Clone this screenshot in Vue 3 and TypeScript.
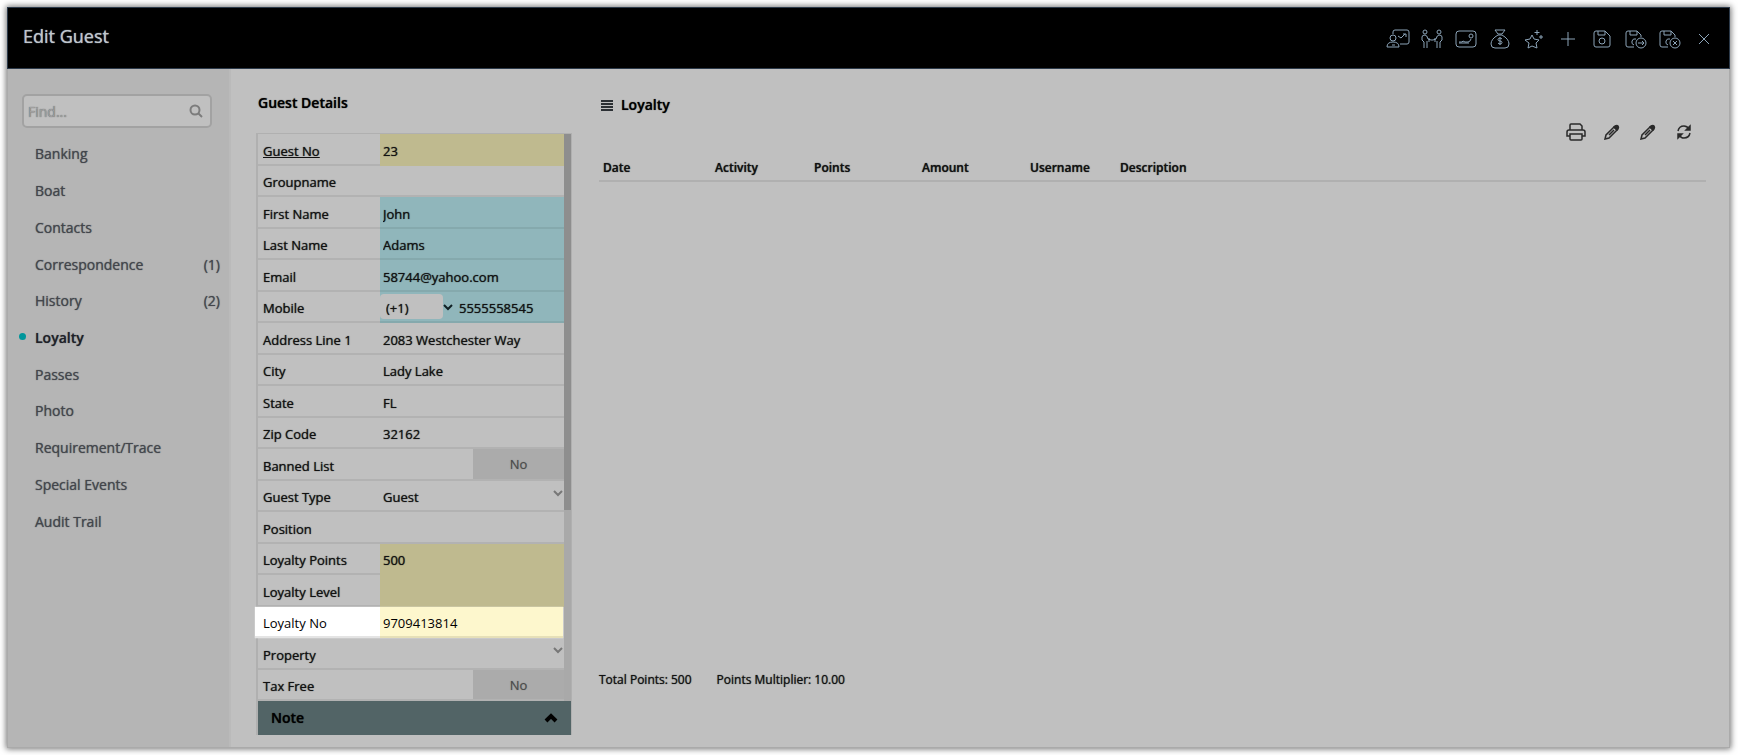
<script setup lang="ts">
import { ref } from 'vue'

interface MenuItem { name: string; count?: number }
interface Field {
  id: string
  label: string
  value: string
  tone?: 'locked' | 'required'
  kind?: 'toggle' | 'select' | 'phone'
  link?: boolean
  focus?: boolean
}

const search = ref('')
const active = ref('Loyalty')
const noteOpen = ref(true)

const menu: MenuItem[] = [
  { name: 'Banking' },
  { name: 'Boat' },
  { name: 'Contacts' },
  { name: 'Correspondence', count: 1 },
  { name: 'History', count: 2 },
  { name: 'Loyalty' },
  { name: 'Passes' },
  { name: 'Photo' },
  { name: 'Requirement/Trace' },
  { name: 'Special Events' },
  { name: 'Audit Trail' },
]

const fields = ref<Field[]>([
  { id: 'guest-no', label: 'Guest No', value: '23', tone: 'locked', link: true },
  { id: 'group', label: 'Groupname', value: '' },
  { id: 'first', label: 'First Name', value: 'John', tone: 'required' },
  { id: 'last', label: 'Last Name', value: 'Adams', tone: 'required' },
  { id: 'email', label: 'Email', value: '58744@yahoo.com', tone: 'required' },
  { id: 'mobile', label: 'Mobile', value: '5555558545', tone: 'required', kind: 'phone' },
  { id: 'address', label: 'Address Line 1', value: '2083 Westchester Way' },
  { id: 'city', label: 'City', value: 'Lady Lake' },
  { id: 'state', label: 'State', value: 'FL' },
  { id: 'zip', label: 'Zip Code', value: '32162' },
  { id: 'banned', label: 'Banned List', value: 'No', kind: 'toggle' },
  { id: 'type', label: 'Guest Type', value: 'Guest', kind: 'select' },
  { id: 'position', label: 'Position', value: '' },
  { id: 'points', label: 'Loyalty Points', value: '500', tone: 'locked' },
  { id: 'level', label: 'Loyalty Level', value: '', tone: 'locked' },
  { id: 'loyalty-no', label: 'Loyalty No', value: '9709413814', tone: 'locked', focus: true },
  { id: 'property', label: 'Property', value: '', kind: 'select' },
  { id: 'tax', label: 'Tax Free', value: 'No', kind: 'toggle' },
])

const columns = ['Date', 'Activity', 'Points', 'Amount', 'Username', 'Description']
</script>

<template>
  <div class="page">
    <div class="window">
      <header class="titlebar">
        <h1>Edit Guest</h1>
        <div class="actions">
          <button type="button" aria-label="Guest presentation">
            <svg width="24" height="20" viewBox="0 0 24 20"><path d="M7 5V3q0-2 2-2h12q2 0 2 2v10q0 2-2 2h-7M12 7l3 2 4-4M17 5h3v3"/><circle cx="7" cy="9" r="3"/><path d="M1 18q0-5 6-5t6 5zM6 16h3"/></svg>
          </button>
          <button type="button" aria-label="Merge guests">
            <svg width="22" height="20" viewBox="0 0 22 20"><circle cx="4" cy="3" r="2"/><circle cx="18" cy="3" r="2"/><path d="M3 19v-6L1 11V8q0-2 3-2 2 0 3 4l3 1h2l3-1q1-4 3-4 3 0 3 2v3l-2 2v6M6 19v-7M16 19v-7M8 9v4M14 9v4"/></svg>
          </button>
          <button type="button" aria-label="Guest card">
            <svg width="22" height="20" viewBox="0 0 22 20"><rect x="1" y="2" width="20" height="16" rx="3"/><path d="M4 13h3l1-1 2 1h3q2 0 3-3M14 7q0-2 2-2t2 2-2 2-2-2M4 14h10"/></svg>
          </button>
          <button type="button" aria-label="Deposits">
            <svg width="20" height="20" viewBox="0 0 20 20"><path d="M5 1h10l-3 4H8zM8 6Q1 10 1 15q0 4 4 4h10q4 0 4-4 0-5-7-9zM12 10q-1-1-2-1-2 0-2 1.500t2 1.500 2 1.500-2 1.500q-1 0-2-1M10 8v8"/></svg>
          </button>
          <button type="button" aria-label="Loyalty rewards">
            <svg width="20" height="20" viewBox="0 0 20 20"><path d="m8 6 2 4 5 1-3 3 1 5-5-2-4 2 1-5-4-3 5-1zM13 1v5M10.500 3.500h5M17 6v4M15 8h4"/></svg>
          </button>
          <button type="button" aria-label="Add">
            <svg width="16" height="20" viewBox="0 0 16 20"><path d="M8 3v14M1 10h14"/></svg>
          </button>
          <button type="button" aria-label="Save">
            <svg width="18" height="20" viewBox="0 0 18 20"><path d="M3 2h9l5 5v9q0 2-2 2H3q-2 0-2-2V4q0-2 2-2zM5 2v4h7V2"/><circle cx="9" cy="12" r="3"/></svg>
          </button>
          <button type="button" aria-label="Save and continue">
            <svg width="22" height="20" viewBox="0 0 22 20"><path d="M9 18H3q-2 0-2-2V4q0-2 2-2h9l4 4v2M5 2v4h7V2M11 10q-3-1-4 2t2 4"/><circle cx="16" cy="14" r="5"/><path d="M13 14h6M17 12l2 2-2 2"/></svg>
          </button>
          <button type="button" aria-label="Save and close">
            <svg width="22" height="20" viewBox="0 0 22 20"><path d="M9 18H3q-2 0-2-2V4q0-2 2-2h9l4 4v2M5 2v4h7V2M11 10q-3-1-4 2t2 4"/><circle cx="16" cy="14" r="5"/><path d="m14 12 4 4M18 12l-4 4"/></svg>
          </button>
          <button type="button" aria-label="Close">
            <svg width="14" height="20" viewBox="0 0 14 20"><path d="m2 5 10 10M12 5 2 15"/></svg>
          </button>
        </div>
      </header>

      <div class="body">
        <nav class="sidebar">
          <div class="search">
            <input v-model="search" type="text" placeholder="Find..." aria-label="Find" />
            <svg width="14" height="14" viewBox="0 0 14 14"><circle cx="6" cy="6" r="4.500"/><path d="m9 9 4 4"/></svg>
          </div>
          <ul>
            <li v-for="item in menu" :key="item.name" :class="{ current: item.name === active }">
              <a href="#" @click.prevent="active = item.name">
                <span>{{ item.name }}</span>
                <span v-if="item.count">({{ item.count }})</span>
              </a>
            </li>
          </ul>
        </nav>

        <section class="details">
          <h2>Guest Details</h2>
          <form @submit.prevent>
            <div class="scroller">
              <div class="rows">
                <div v-for="f in fields" :key="f.id" class="row" :class="[f.tone, f.kind, { focus: f.focus }]">
                  <label :for="f.id"><a v-if="f.link" href="#">{{ f.label }}</a><template v-else>{{ f.label }}</template></label>
                  <div class="value">
                    <button v-if="f.kind === 'toggle'" :id="f.id" type="button">{{ f.value }}</button>
                    <template v-else-if="f.kind === 'select'">
                      <select :id="f.id" v-model="f.value"><option>{{ f.value }}</option></select>
                      <svg class="caret" width="10" height="8" viewBox="0 0 10 8"><path d="m1 2 4 4 4-4"/></svg>
                    </template>
                    <template v-else>
                      <template v-if="f.kind === 'phone'">
                        <select class="code" aria-label="Country code"><option>(+1)</option></select>
                        <svg class="caret" width="10" height="8" viewBox="0 0 10 8"><path d="m1 2 4 4 4-4"/></svg>
                      </template>
                      <input :id="f.id" v-model="f.value" type="text" />
                    </template>
                  </div>
                </div>
              </div>
              <div class="track"><div class="thumb"></div></div>
            </div>
            <button class="note" type="button" :aria-expanded="noteOpen" @click="noteOpen = !noteOpen">
              <span>Note</span>
              <svg width="14" height="10" viewBox="0 0 14 10"><path d="m2 8 5-5 5 5"/></svg>
            </button>
          </form>
        </section>

        <section class="loyalty">
          <h2>
            <svg width="12" height="13" viewBox="0 0 12 13"><path d="M0 2h12M0 5h12M0 8h12M0 11h12"/></svg>
            Loyalty
          </h2>
          <div class="tools">
            <button type="button" aria-label="Print">
              <svg width="20" height="20" viewBox="0 0 20 20"><path d="M4 8V3q0-1 1-1h9l2 2v4M4 14H1v-4q0-2 2-2h14q2 0 2 2v4h-3M4 12h12v5q0 1-1 1H5q-1 0-1-1z"/></svg>
            </button>
            <button type="button" aria-label="Edit">
              <svg width="16" height="16" viewBox="0 0 16 16"><path d="m1 15 1-4 8-8 3 3-8 8zM5 11l5-5"/><path class="solid" d="m10 3 1-1q2-1 3 0t0 3l-1 1z"/></svg>
            </button>
            <button type="button" aria-label="Edit all">
              <svg width="16" height="16" viewBox="0 0 16 16"><path d="m1 15 1-4 8-8 3 3-8 8zM5 11l5-5"/><path class="solid" d="m10 3 1-1q2-1 3 0t0 3l-1 1z"/></svg>
            </button>
            <button type="button" aria-label="Refresh">
              <svg width="16" height="16" viewBox="0 0 16 16"><path d="M2 7q1-5 6-5 3 0 5 3M14 9q-1 5-6 5-3 0-5-3"/><path class="solid" d="M14 2v4h-4zM2 14v-4h4z"/></svg>
            </button>
          </div>
          <table>
            <thead>
              <tr><th v-for="c in columns" :key="c" scope="col">{{ c }}</th></tr>
            </thead>
          </table>
          <footer>
            <span>Total Points: 500</span>
            <span>Points Multiplier: 10.00</span>
          </footer>
        </section>
      </div>
    </div>
  </div>
</template>

<style>
body { background: #fff; }
</style>

<style scoped>
* { box-sizing: border-box; }
.page {
  padding: 7px 8px 8px 7px;
  font: 13px/18px "Open Sans", "Noto Sans", sans-serif;
  color: #111;
  text-shadow: 0 0 1px rgba(0, 0, 0, 0.8);
}
button, input, select { font: inherit; color: inherit; text-shadow: inherit; background: none; border: 0; padding: 0; margin: 0; min-width: 0; border-radius: 0; outline: none; }
a { color: inherit; text-decoration: none; }
svg { display: block; fill: none; stroke: currentColor; }
.solid { fill: currentColor; }
.window { background: #c0c0c0; border: 1px solid #aaa; border-top: 0; box-shadow: 0 0 6px 1px rgba(0, 0, 0, 0.55); }
.titlebar {
  display: flex;
  justify-content: space-between;
  height: 62px;
  margin: 0 -1px;
  padding: 0 13px 0 15px;
  background: #000;
  border: 1px solid #2c3a4a;
}
h1 { margin: 15px 0 0; font-size: 18px; line-height: 26px; font-weight: 400; color: #c0c6cc; text-shadow: 0 0 1px #b4c4d4; }
.actions { display: flex; align-items: center; gap: 10px; color: #8ca4b8; padding-top: 2px; }
.actions button { display: flex; justify-content: center; width: 24px; }
.body { display: grid; grid-template-columns: 223px 342px minmax(0, 1fr); min-height: 677px; }

.sidebar { background: #b5b5b5; padding: 25px 0 0; border-right: 2px solid #bababa; color: #43464c; font-size: 14px; text-shadow: 0 0 1px rgba(67, 70, 76, 0.9); }
.search { display: flex; align-items: center; height: 34px; margin: 0 17px 0 14px; padding: 0 7px 0 4px; border: 2px solid #a2a2a2; border-radius: 5px; background: #c0c0c0; }
.search input { flex: 1; height: 28px; }
.search input::placeholder { color: #a0a0a0; opacity: 1; }
.search svg { color: #7c7c7c; stroke-width: 2; }
ul { display: grid; grid-auto-rows: 1fr; height: 404px; margin: 8px 0 0; padding: 0; list-style: none; }
li { position: relative; display: flex; align-items: center; }
li a { display: flex; flex: 1; justify-content: space-between; padding: 0 9px 0 27px; }
.current { color: #1e2128; font-weight: 600; }
.current::before { content: ""; position: absolute; left: 11px; top: 13px; width: 7px; height: 7px; border-radius: 50%; background: #00969b; }

h2 { margin: 0; font-size: 14px; line-height: 20px; font-weight: 600; color: #000; }
.details { padding: 24px 0 12px 25px; }
.details h2 { padding-left: 2px; }
form { width: 316px; margin-top: 20px; border: solid #b0b0b0; border-width: 1px 1px 0 2px; }
.scroller { display: grid; grid-template-columns: 1fr 7px; }
.track { background: #a9a9a9; }
.thumb { height: 376px; background: #8e8e8e; }
.row { display: grid; grid-template-columns: 122px minmax(0, 1fr); height: 31px; }
.row:nth-child(odd) { height: 32px; }
label, .value { border-bottom: 2px solid rgba(0, 0, 0, 0.07); }
label { display: flex; align-items: center; padding: 3px 0 0 5px; }
label a { text-decoration: underline; }
.value { position: relative; display: flex; align-items: center; }
.value input { flex: 1; height: 100%; padding: 3px 0 0 3px; }
.locked .value { background: #bfba8f; border-bottom-color: transparent; }
.required .value { background: #90b6bb; }
.value select { appearance: none; flex: 1; height: 100%; padding: 3px 0 0 3px; }
.value .caret { color: #777; stroke-width: 2; }
.select .caret { position: absolute; right: 1px; top: 8px; }
.phone .value .code { flex: 0 0 63px; height: 25px; padding: 2px 0 0 6px; background: #c0c0c0; border-radius: 4px; }
.phone .caret { color: #102024; margin-right: 3px; }
.toggle .value { justify-content: flex-end; }
.toggle button { width: 91px; height: 100%; background: #ababab; color: #4c4c4c; text-shadow: 0 0 1px rgba(76, 76, 76, 0.6); }
.focus { position: relative; margin: 0 1px 0 -3px; grid-template-columns: 125px minmax(0, 1fr); box-shadow: 0 0 1px #fff; text-shadow: none; color: #000; }
.focus label { background: #fff; padding-left: 8px; border-bottom-color: #e4e4e4; }
.focus .value { background: #fdf7cd; border-bottom-color: #e6e0b8; }
.note { display: flex; width: 100%; height: 34px; align-items: center; justify-content: space-between; padding: 0 13px; background: #526466; font-size: 14px; font-weight: 600; color: #000; }
.note svg { stroke-width: 4; }

.loyalty { display: flex; flex-direction: column; padding: 26px 23px 57px 26px; }
.loyalty h2 { display: flex; align-items: center; gap: 8px; padding-left: 2px; }
.loyalty h2 svg { stroke-width: 2; color: #2c3034; }
.tools { display: flex; align-items: center; justify-content: flex-end; gap: 16px; padding-right: 12px; margin-top: 7px; color: #2a2a2a; }
.tools button { display: flex; justify-content: center; width: 20px; }
.tools svg { stroke-width: 1.500; }
table { width: 100%; margin-top: 13px; table-layout: fixed; border-collapse: collapse; border-bottom: 2px solid #b0b0b0; }
th { padding: 4px 0 4px 4px; font-size: 12px; line-height: 17px; font-weight: 600; text-align: left; }
th:nth-child(1) { width: 112px; }
th:nth-child(2) { width: 99px; }
th:nth-child(3), th:nth-child(4) { width: 108px; }
th:nth-child(5) { width: 90px; }
footer { display: flex; gap: 25px; margin-top: auto; font-size: 12px; line-height: 20px; font-weight: 500; }
</style>
